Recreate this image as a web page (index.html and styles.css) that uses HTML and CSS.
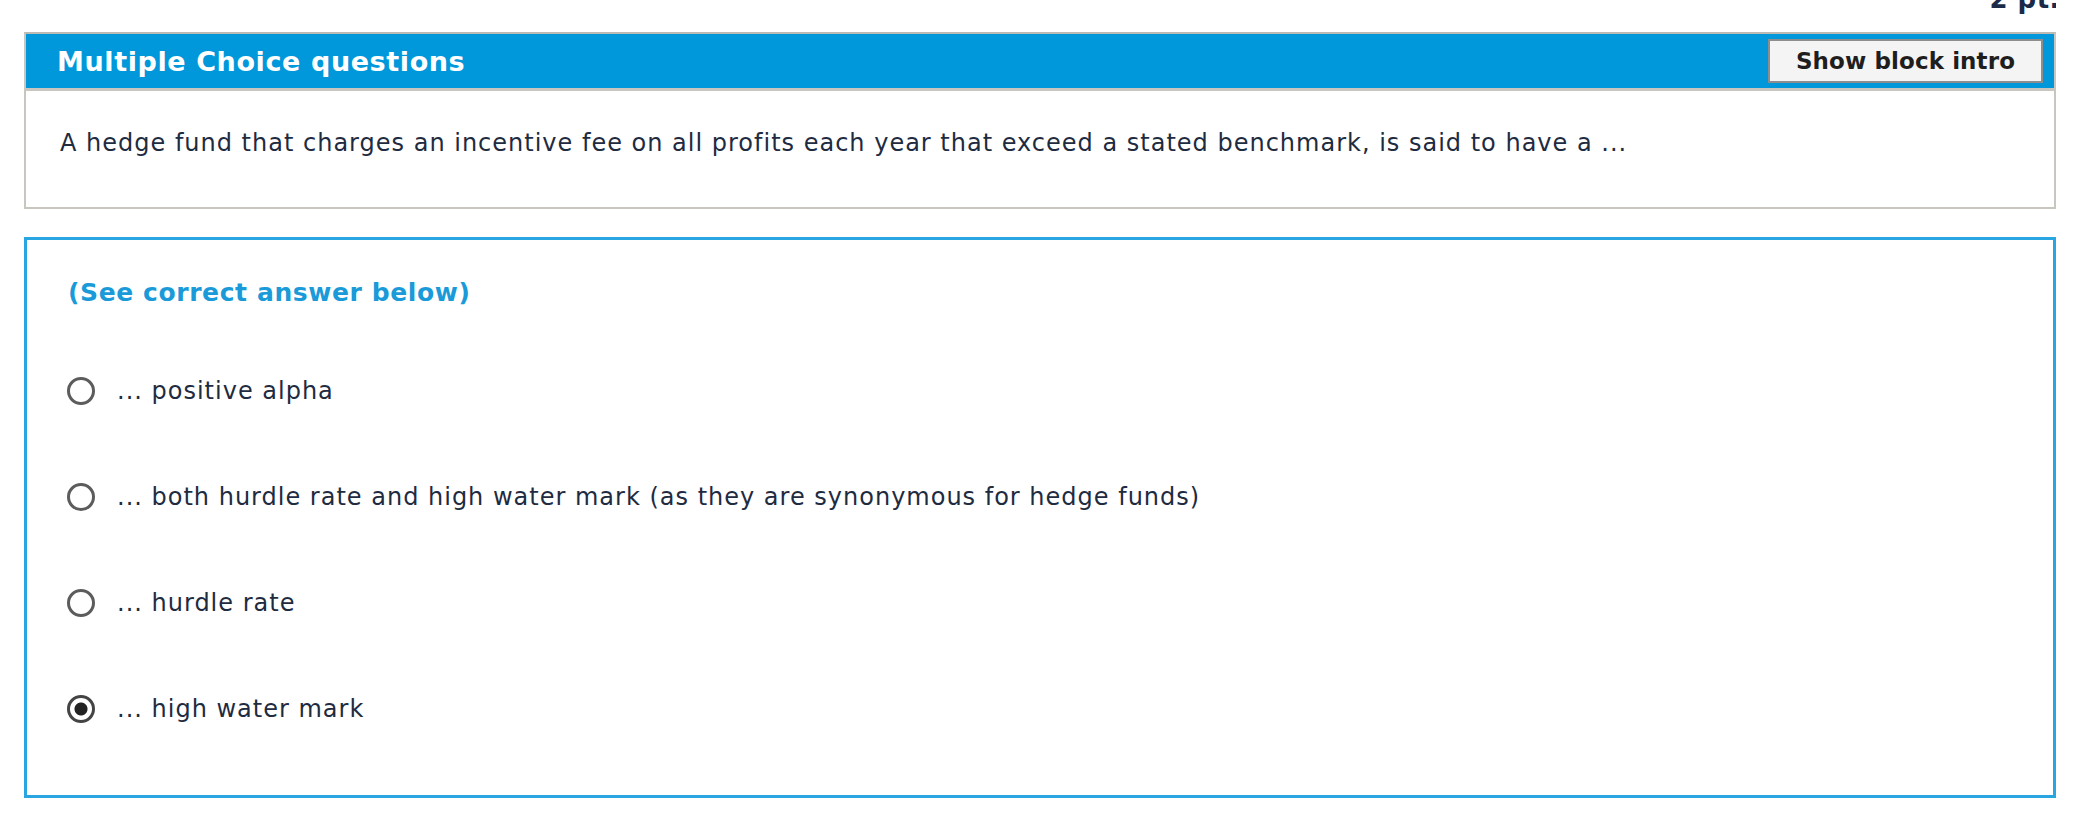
FILE: index.html
```html
<!DOCTYPE html>
<html>
<head>
<meta charset="utf-8">
<link rel="stylesheet" href="styles.css">
</head>
<body>
<div class="page">
  <div class="points">2 pt.</div>
  <div class="block">
    <div class="block-head">
      <span class="block-title">Multiple Choice questions</span>
      <button class="intro-btn">Show block intro</button>
    </div>
    <div class="block-body">A hedge fund that charges an incentive fee on all profits each year that exceed a stated benchmark, is said to have a ...</div>
  </div>
  <div class="answers">
    <div class="answer-note">(See correct answer below)</div>
    <div class="option"><span class="radio"></span><span class="opt-text">... positive alpha</span></div>
    <div class="option"><span class="radio"></span><span class="opt-text">... both hurdle rate and high water mark (as they are synonymous for hedge funds)</span></div>
    <div class="option"><span class="radio"></span><span class="opt-text">... hurdle rate</span></div>
    <div class="option"><span class="radio checked"></span><span class="opt-text">... high water mark</span></div>
  </div>
</div>
</body>
</html>
```
FILE: styles.css
```css
html, body {
  margin: 0;
  padding: 0;
  background: #ffffff;
}
.page {
  width: 2032px;
  padding-left: 24px;
  font-family: "DejaVu Sans", Verdana, sans-serif;
  color: #1e2b40;
  overflow: hidden;
  height: 820px;
}
.points {
  text-align: right;
  font-weight: bold;
  font-size: 26px;
  line-height: 26px;
  margin-top: -14px;
  height: 26px;
  margin-right: -4px;
  color: #1a2a48;
  letter-spacing: 0.5px;
}
.block {
  margin-top: 20px;
  border: 2px solid #c9c6bf;
  border-top-color: #bdbab3;
}
.block-head {
  background: #0098da;
  height: 54px;
  border-bottom: 3px solid #c9c6bf;
  display: flex;
  align-items: center;
  justify-content: space-between;
  padding: 0 11px 0 31px;
}
.block-title {
  color: #ffffff;
  font-weight: bold;
  font-size: 27px;
  letter-spacing: 0.6px;
}
.intro-btn {
  font-family: "DejaVu Sans", Verdana, sans-serif;
  font-weight: bold;
  font-size: 23px;
  letter-spacing: 0.1px;
  color: #1e1e1e;
  background: #f4f4f4;
  border: 2px solid #8d8d8d;
  height: 44px;
  width: 275px;
  padding: 0;
}
.block-body {
  height: 116px;
  box-sizing: border-box;
  padding: 38px 0 0 34px;
  font-size: 24px;
  letter-spacing: 1px;
  line-height: 28px;
}
.answers {
  margin-top: 28px;
  border: 3px solid #29a6e2;
  height: 561px;
  box-sizing: border-box;
  padding: 38px 0 0 41px;
}
.answer-note {
  color: #1a9ad8;
  font-weight: bold;
  font-size: 25px;
  letter-spacing: 0.6px;
  line-height: 30px;
  margin-bottom: 30px;
}
.option {
  display: flex;
  align-items: center;
  gap: 22px;
  height: 106px;
  font-size: 24px;
  letter-spacing: 1px;
}
.radio {
  width: 22px;
  height: 22px;
  border: 3px solid #5c5c5c;
  border-radius: 50%;
  box-sizing: content-box;
  margin-left: -1px;
  flex: none;
}
.radio.checked {
  background: radial-gradient(circle, #222 0 6px, #fff 7px);
  border-color: #444;
}
```
